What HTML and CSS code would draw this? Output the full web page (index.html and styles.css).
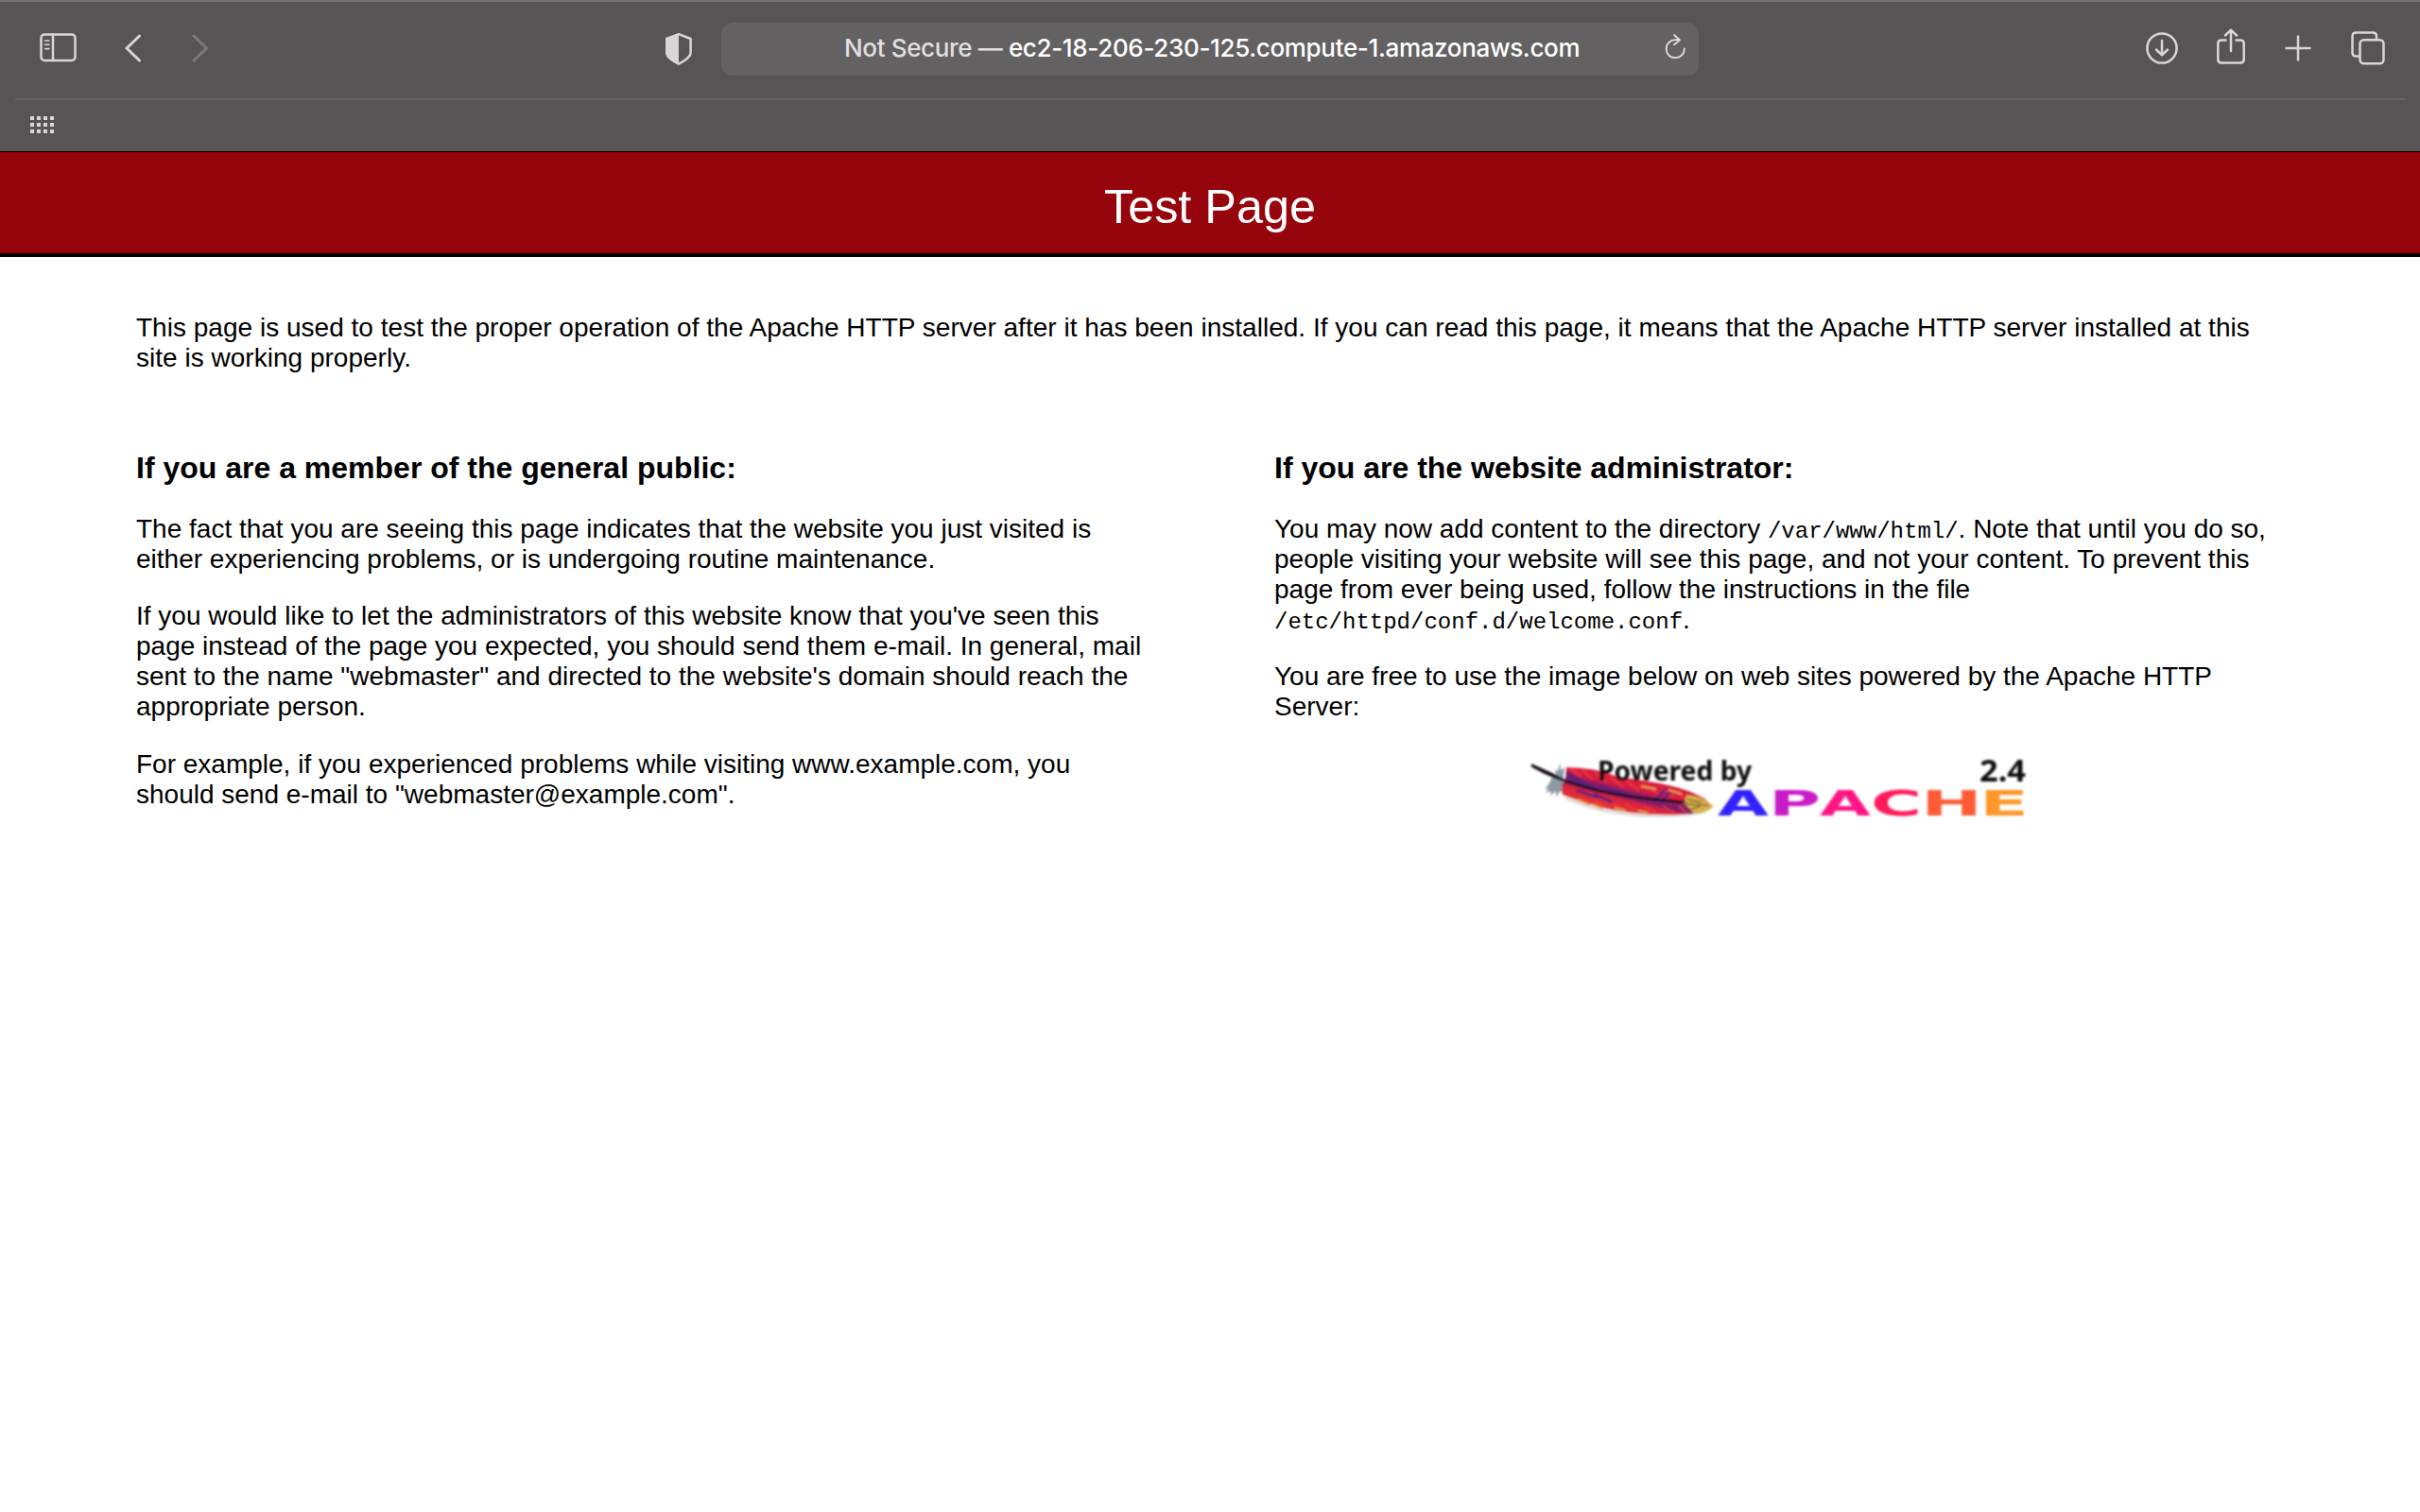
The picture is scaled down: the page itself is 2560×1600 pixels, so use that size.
FILE: index.html
```html
<!DOCTYPE html>
<html lang="en">
<head>
<meta charset="utf-8">
<title>Test Page</title>
<link rel="stylesheet" href="styles.css">
</head>
<body>
<header class="browser">
  <div class="toolbar">
    <div class="group group-left">
      <svg class="icon" width="40" height="32" viewBox="0 0 40 32"><rect x="1.5" y="1.5" width="36" height="27.5" rx="3.5"/><path d="M14 1.5v27.5"/><path class="thin" d="M5.5 8h4.500M5.500 12.300h4.500M5.500 16.600h4.500"/></svg>
      <svg class="icon chevron" width="18" height="30" viewBox="0 0 18 30"><path d="M15.500 2L2 15l13.500 13"/></svg>
      <svg class="icon chevron forward" width="18" height="30" viewBox="0 0 18 30"><path d="M2 2l13.500 13L2 28"/></svg>
    </div>
    <svg class="icon shield" width="28" height="34" viewBox="0 0 28 34"><path d="M14 1.200L26.600 6v15q0 5-12.600 11.700Q1.200 26 1.200 21V6z"/><path class="solid" d="M14 .5L.5 5.500v16q0 5 13.500 12z"/></svg>
    <div class="address">
      <span class="url"><span class="insecure">Not Secure — </span>ec2-18-206-230-125.compute-1.amazonaws.com</span>
      <svg class="icon reload" width="22" height="26" viewBox="0 0 22 26"><path d="M14.500 6.200H11A9.600 9.500 0 1 0 20.800 15.500M10 1l6 5.400L10 11.300"/></svg>
    </div>
    <div class="group group-right">
      <svg class="icon" width="34" height="34" viewBox="0 0 34 34"><circle cx="17" cy="17" r="15.600"/><path d="M17 9v15M11 18.500l6 5.800 6-5.800"/></svg>
      <svg class="icon share" width="30" height="38" viewBox="0 0 30 38"><path d="M9.500 12.500H5q-3.700 0-3.700 3.700v16.500q0 3.700 3.700 3.700h20q3.700 0 3.700-3.700V16.200q0-3.700-3.700-3.700h-4.500M15 24V2M9 7.500L15 1.700l6 5.800"/></svg>
      <svg class="icon plus" width="28" height="28" viewBox="0 0 28 28"><path d="M14 1.500v25M1.500 14h25"/></svg>
      <svg class="icon" width="36" height="36" viewBox="0 0 36 36"><rect x="9.500" y="9.200" width="25" height="25" rx="4"/><path d="M9 26.500H5.500q-4 0-4-4V5.500q0-4 4-4h17.500q4 0 4 4V9"/></svg>
    </div>
  </div>
  <div class="favorites">
    <svg class="dots" width="25" height="18" viewBox="0 0 25 18"><path d="M0 2h25M0 9h25M0 16h25"/></svg>
  </div>
</header>
<h1 class="banner">Test Page</h1>
<main class="content">
  <p class="intro">This page is used to test the proper operation of the Apache HTTP server after it has been installed. If you can read this page, it means that the Apache HTTP server installed at this site is working properly.</p>
  <div class="columns">
    <section class="column">
      <h2>If you are a member of the general public:</h2>
      <p>The fact that you are seeing this page indicates that the website you just visited is either experiencing problems, or is undergoing routine maintenance.</p>
      <p>If you would like to let the administrators of this website know that you've seen this page instead of the page you expected, you should send them e-mail. In general, mail sent to the name "webmaster" and directed to the website's domain should reach the appropriate person.</p>
      <p>For example, if you experienced problems while visiting www.example.com, you should send e-mail to "webmaster@example.com".</p>
    </section>
    <section class="column">
      <h2>If you are the website administrator:</h2>
      <p>You may now add content to the directory <code>/var/www/html/</code>. Note that until you do so, people visiting your website will see this page, and not your content. To prevent this page from ever being used, follow the instructions in the file <code>/etc/httpd/conf.d/welcome.conf</code>.</p>
      <p>You are free to use the image below on web sites powered by the Apache HTTP Server:</p>
      <svg class="logo" width="524" height="64" viewBox="0 0 524 64">
        <defs>
          <linearGradient id="vane" gradientUnits="userSpaceOnUse" x1="104" y1="16" x2="94" y2="56"><stop offset="0" stop-color="#d51f3c"/><stop offset=".3" stop-color="#db1b40"/><stop offset=".45" stop-color="#8a1f66"/><stop offset=".56" stop-color="#7a1f6c"/><stop offset=".68" stop-color="#dd203b"/><stop offset="1" stop-color="#df3a38"/></linearGradient>
          <filter id="soft" x="-5%" y="-15%" width="110%" height="130%"><feGaussianBlur stdDeviation="0.8"/></filter>
        </defs>
        <g filter="url(#soft)">
          <path class="shadow" d="M36 40q40 18 88 19 40 0 60-5"/>
          <path class="down" d="M22 18l4-3-1-5 3 2 2-9 1 8 4-3-1 8v20l-4-3-3 6-2-6-4 5-1-5-5 2 3-5-4 1 5-6z"/>
          <path fill="url(#vane)" d="M37 8q31 0 54 10c38 6 65 8 92 23q5 5 9 8-4 6-20 8-34 3-67-1C80 53 57 47 33 37l-1-11 4-4z"/>
          <path class="streaks" d="M42 9l10 9M53 10l12 11M67 13l13 11M83 18l14 11M101 22l13 11M120 26l14 10M138 30l13 9M154 34l10 8M50 41l12 3M64 40l14 10M82 44l14 8M99 46l14 9M119 49l13 7M139 49l12 7M156 49l9 8"/>
          <path class="purple" d="M37 13l31 18M37 18l27 14M72 27l30 12M91 33l26 9M130 44l12-13M137 45l10-12M66 36l20 9M48 32l22 8"/>
          <path class="gold" d="M48 42l14 6M64 47l12 5M88 51l12 3M113 54l10 2M116 28l16 3M145 32l14 4"/>
          <path class="tip" d="M164 37q18 2 28 12-6 8-20 8l-10-11z"/>
          <path class="quill" d="M2 7C31 24 75 36 115 40q31 4 46 5M1 6l20 9 16 8"/>
          <path class="tipline" d="M160 46q14 2 27 2M165 42l15 3M167 53l12-4"/>
          <text class="powered" x="70" y="22" textLength="163" lengthAdjust="spacingAndGlyphs">Powered by</text>
          <text class="powered version" x="474" y="23" textLength="49" lengthAdjust="spacingAndGlyphs">2.4</text>
          <g class="apache">
            <text x="197" y="59" textLength="54" lengthAdjust="spacingAndGlyphs" fill="#3321ff">A</text>
            <text x="251" y="59" textLength="55" lengthAdjust="spacingAndGlyphs" fill="#c81bc8">P</text>
            <text x="305" y="59" textLength="54" lengthAdjust="spacingAndGlyphs" fill="#ff1484">A</text>
            <text x="359" y="59" textLength="54" lengthAdjust="spacingAndGlyphs" fill="#ff1d5b">C</text>
            <text x="412" y="59" textLength="65" lengthAdjust="spacingAndGlyphs" fill="#ff5b36">H</text>
            <text x="474" y="59" textLength="52" lengthAdjust="spacingAndGlyphs" fill="#ff9629">E</text>
          </g>
        </g>
      </svg>
    </section>
  </div>
</main>
</body>
</html>
```

FILE: styles.css
```css
* { box-sizing: border-box; }
body { margin: 0; min-height: 1600px; background: #fff; color: #000; font: 28px/32px "Liberation Sans", Arial, sans-serif; }
.browser { height: 161px; background: #565454; border-top: 2px solid #727070; border-bottom: 1px solid #000; }
.toolbar { height: 102px; margin: 0 16px; padding: 0 21px 2px 26px; display: flex; align-items: center; }
.group { display: flex; align-items: center; margin-top: -2px; }
.group-left { width: 662px; gap: 50px; }
.icon { flex: none; fill: none; stroke: #d8d6d7; stroke-width: 2.5; stroke-linecap: round; stroke-linejoin: round; }
.thin { stroke-width: 1.6; }
.chevron { stroke-width: 3; }
.forward { stroke: #7b797a; margin-left: 3px; }
.solid { fill: #d8d6d7; stroke: none; }
.address { width: 1034px; height: 56px; margin-left: 31px; padding: 0 14px 0 130px; border-radius: 12px; background: #636162; display: flex; align-items: center; }
.url { flex: 1; min-width: 0; color: #fff; font: 500 26px/54px Inter, sans-serif; letter-spacing: -0.34px; white-space: nowrap; padding-bottom: 2px; }
.insecure { color: #e1dfe0; letter-spacing: -0.36px; }
.reload { stroke: #e1dfe0; stroke-width: 1.8; margin-top: -6px; }
.group-right { margin-left: auto; gap: 42px; }
.share { margin: -4px 0 0 -1px; }
.favorites { height: 56px; margin: 0 16px; padding: 17px 16px; border-top: 2px solid #636162; display: flex; align-items: flex-start; }
.dots { fill: none; stroke: #d8d6d7; stroke-width: 4; stroke-dasharray: 4 3; }
.banner { height: 111px; margin: 0; padding-top: 28px; background: #96040c; border-bottom: 4px solid #000; color: #fff; font-size: 50.4px; line-height: 60px; font-weight: 400; text-align: center; }
.content { padding: 59px 144px 0; }
p { margin: 0 0 28.4px; }
.intro { margin-bottom: 0; letter-spacing: 0.018px; }
.columns { margin-top: 81px; display: grid; grid-template-columns: 1068px 1068px; column-gap: 136px; }
h2 { margin: 0 0 30px; font-size: 32px; line-height: 38px; font-weight: 700; }
code { font: 24px/24px "Liberation Mono", monospace; }
.logo { display: block; margin: 40px auto 0; overflow: visible; }
.shadow { fill: none; stroke: #e4e0df; stroke-width: 4; }
.down { fill: #8d9aa2; }
.streaks { fill: none; stroke: #ed4538; stroke-width: 1.3; }
.purple { fill: none; stroke: #52207c; stroke-width: 2.8; }
.gold { fill: none; stroke: #e9a14d; stroke-width: 2; }
.tip { fill: #d6b24c; }
.quill { fill: none; stroke: #17101b; stroke-width: 3; stroke-linecap: round; }
.tipline { fill: none; stroke: #80612c; stroke-width: 1.5; }
.powered { font: 700 29px "Noto Sans", sans-serif; fill: #111; }
.version { font-size: 32px; }
.apache { font: 700 38px "DejaVu Sans", sans-serif; }
```
